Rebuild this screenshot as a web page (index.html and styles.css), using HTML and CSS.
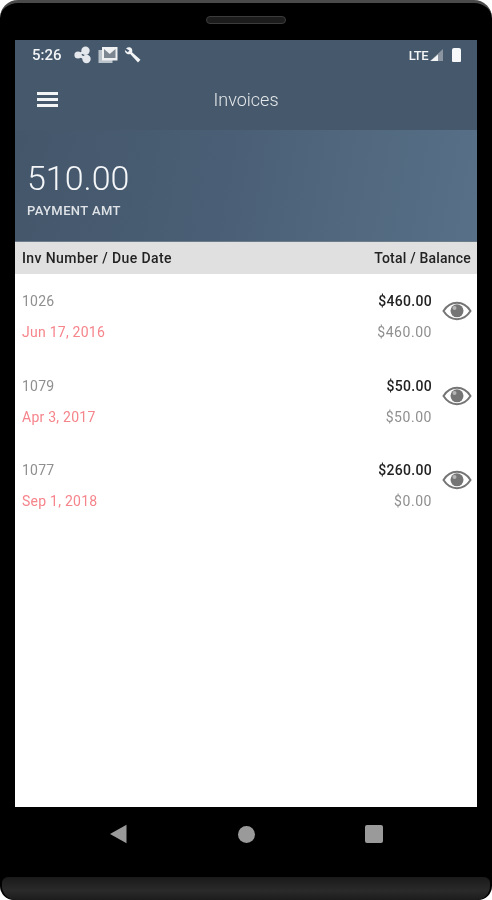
FILE: index.html
```html
<!DOCTYPE html>
<html lang="en">
    <head>
        <meta charset="UTF-8">
        <meta name="viewport" content="width=device-width, initial-scale=1.0">
        <title>Invoices</title>
        <link rel="stylesheet" href="styles.css">
    </head>
    <body>
        <div class="phone">
            <div class="speaker-row"><div class="speaker"></div></div>
            <div class="screen">
                <div class="status-bar">
                    <div class="status-left">
                        <span class="clock">5:26</span>
                        <svg class="status-icon" width="18" height="18" viewBox="0 0 18 18">
                            <circle cx="4" cy="9" r="3.600" fill="#e4e8ec"/>
                            <circle cx="11.500" cy="4.800" r="4.200" fill="#e4e8ec"/>
                            <circle cx="12.500" cy="13" r="4.200" fill="#e4e8ec"/>
                            <path d="M4 9L11.500 4.800M4 9L12.500 13" stroke="#e4e8ec" stroke-width="2.500"/>
                        </svg>
                        <svg class="status-icon" width="20" height="18" viewBox="0 0 20 18">
                            <rect x="0.500" y="4" width="14" height="13" fill="#b9c1c9"/>
                            <rect x="4" y="1" width="15.500" height="13.500" fill="#eef0f2"/>
                            <path d="M6 3L11.700 8L17.500 3V12H6Z" fill="#7d8792"/>
                            <path d="M7.500 3H16L11.700 6.500Z" fill="#eef0f2"/>
                        </svg>
                        <svg class="status-icon" width="18" height="18" viewBox="0 0 18 18">
                            <path d="M2 2.500C4 .8 7 1 8 3.200C8.600 4.500 8.300 5.500 8 6.200L16.500 13.800L14 16.500L6.200 8C4.500 8.700 2.500 8 1.500 6.500C1 5.600 .8 4.800 .9 4L3.800 6.300L5.400 4.500Z" fill="#f2f4f6"/>
                        </svg>
                    </div>
                    <div class="status-right">
                        <span class="lte">LTE</span>
                        <svg width="15" height="14" viewBox="0 0 15 14">
                            <path d="M14 1V13H1Z" fill="#8a95a1"/>
                            <path d="M9 6.500V13H1.500Z" fill="#f2f4f6"/>
                        </svg>
                        <div class="battery"></div>
                    </div>
                </div>
                <div class="toolbar">
                    <div class="hamburger">
                        <div></div>
                        <div></div>
                        <div></div>
                    </div>
                    <div class="toolbar-title">Invoices</div>
                </div>
                <div class="payment">
                    <div class="payment-value">510.00</div>
                    <div class="payment-label">PAYMENT AMT</div>
                </div>
                <div class="table-head">
                    <span class="head-left">Inv Number / Due Date</span>
                    <span class="head-right">Total / Balance</span>
                </div>
                <div class="invoice-list">
                    <div class="invoice">
                        <div class="invoice-left">
                            <div class="inv-number">1026</div>
                            <div class="inv-date">Jun 17, 2016</div>
                        </div>
                        <div class="invoice-right">
                            <div class="inv-total">$460.00</div>
                            <div class="inv-balance">$460.00</div>
                        </div>
                        <svg class="eye" width="30" height="20" viewBox="0 0 30 20">
                            <path d="M1.500 10C5 4.500 9.500 1.800 15 1.800C20.500 1.800 25 4.500 28.500 10C25 15.500 20.500 18.200 15 18.200C9.500 18.200 5 15.500 1.500 10Z" fill="none" stroke="#757575" stroke-width="2"/>
                            <circle cx="15" cy="9.800" r="6.500" fill="#757575"/>
                            <circle cx="12.500" cy="7" r="2" fill="#b5b5b5"/>
                        </svg>
                    </div>
                    <div class="invoice">
                        <div class="invoice-left">
                            <div class="inv-number">1079</div>
                            <div class="inv-date">Apr 3, 2017</div>
                        </div>
                        <div class="invoice-right">
                            <div class="inv-total">$50.00</div>
                            <div class="inv-balance">$50.00</div>
                        </div>
                        <svg class="eye" width="30" height="20" viewBox="0 0 30 20">
                            <path d="M1.500 10C5 4.500 9.500 1.800 15 1.800C20.500 1.800 25 4.500 28.500 10C25 15.500 20.500 18.200 15 18.200C9.500 18.200 5 15.500 1.500 10Z" fill="none" stroke="#757575" stroke-width="2"/>
                            <circle cx="15" cy="9.800" r="6.500" fill="#757575"/>
                            <circle cx="12.500" cy="7" r="2" fill="#b5b5b5"/>
                        </svg>
                    </div>
                    <div class="invoice">
                        <div class="invoice-left">
                            <div class="inv-number">1077</div>
                            <div class="inv-date">Sep 1, 2018</div>
                        </div>
                        <div class="invoice-right">
                            <div class="inv-total">$260.00</div>
                            <div class="inv-balance">$0.00</div>
                        </div>
                        <svg class="eye" width="30" height="20" viewBox="0 0 30 20">
                            <path d="M1.500 10C5 4.500 9.500 1.800 15 1.800C20.500 1.800 25 4.500 28.500 10C25 15.500 20.500 18.200 15 18.200C9.500 18.200 5 15.500 1.500 10Z" fill="none" stroke="#757575" stroke-width="2"/>
                            <circle cx="15" cy="9.800" r="6.500" fill="#757575"/>
                            <circle cx="12.500" cy="7" r="2" fill="#b5b5b5"/>
                        </svg>
                    </div>
                </div>
            </div>
            <div class="nav-bar">
                <svg width="18" height="20" viewBox="0 0 18 20"><path d="M0 10L16.500 .8V19.200Z" fill="#9a9a9a"/></svg>
                <div class="nav-circle"></div>
                <div class="nav-square"></div>
            </div>
            <div class="chin"></div>
        </div>
    </body>
</html>
```

FILE: styles.css
```css
body {
    font-family: Roboto, "Liberation Sans", sans-serif;
    margin: 0;
    padding: 0;
    background-color: white;
}

.phone {
    width: 492px;
    height: 900px;
    box-sizing: border-box;
    background-color: black;
    border-top: 3px solid #4a4a4a;
    border-radius: 18px 18px 14px 14px;
    display: flex;
    flex-direction: column;
    overflow: hidden;
    filter: blur(0.35px);
}

.speaker-row {
    height: 37px;
    display: flex;
    justify-content: center;
    padding-top: 13px;
    box-sizing: border-box;
}

.speaker {
    width: 80px;
    height: 8px;
    box-sizing: border-box;
    background-color: #1c1c1c;
    border: 1px solid #3c3c3c;
    border-radius: 4px;
}

.screen {
    margin: 0 15px;
    height: 767px;
    background-color: white;
    display: flex;
    flex-direction: column;
}

.status-bar {
    height: 30px;
    background-color: #46586b;
    display: flex;
    justify-content: space-between;
    align-items: center;
    padding: 0 16px 0 17px;
}

.status-left {
    display: flex;
    align-items: center;
    gap: 6px;
}

.clock {
    color: #f2f4f6;
    font-size: 15px;
    font-weight: 500;
    margin-right: 6px;
}

.status-right {
    display: flex;
    align-items: center;
    gap: 1px;
}

.lte {
    color: #f2f4f6;
    font-size: 13px;
    font-weight: 500;
    letter-spacing: -0.5px;
}

.battery {
    width: 9px;
    height: 14px;
    margin-left: 7px;
    background-color: #f6f7f8;
    border-radius: 2px 2px 1px 1px;
}

.toolbar {
    height: 60px;
    background-color: #46586b;
    display: flex;
    align-items: center;
    position: relative;
}

.hamburger {
    margin-left: 22px;
    padding-bottom: 2px;
}

.hamburger div {
    width: 21px;
    height: 3px;
    background-color: #f2f4f6;
    margin: 3px 0;
}

.toolbar-title {
    flex: 1;
    text-align: center;
    color: #e3e7ea;
    font-size: 18px;
    font-weight: 300;
    margin-right: 43px;
    padding-bottom: 2px;
}

.payment {
    height: 112px;
    box-sizing: border-box;
    padding: 28px 12px 0;
    background: linear-gradient(100deg, #44566a 0%, #4a5f75 45%, #587188 100%);
    border-bottom: 1px solid #6c7c8b;
}

.payment-value {
    color: #f4f6f8;
    font-size: 34px;
    font-weight: 300;
    line-height: 40px;
}

.payment-label {
    color: #dfe3e7;
    font-size: 13px;
    font-weight: 500;
    letter-spacing: 0.4px;
    margin-top: 5px;
}

.table-head {
    height: 32px;
    background-color: #e0e0e0;
    display: flex;
    justify-content: space-between;
    align-items: center;
    padding: 0 6px 0 7px;
    font-size: 14px;
    font-weight: 500;
    color: #222;
}

.head-left {
    letter-spacing: 0.4px;
}

.head-right {
    letter-spacing: 0.2px;
}

.invoice-list {
    padding-top: 12px;
}

.invoice {
    height: 84.5px;
    display: flex;
    align-items: flex-start;
    padding: 0 5px 0 7px;
    font-size: 14px;
    letter-spacing: 0.2px;
}

.invoice-left {
    flex: 1;
}

.invoice-right {
    text-align: right;
    margin-right: 10px;
}

.inv-number,
.inv-date,
.inv-total,
.inv-balance {
    height: 31px;
    line-height: 30px;
}

.inv-number {
    color: #8f8f8f;
}

.inv-date {
    color: #f6848b;
    letter-spacing: 0.25px;
}

.inv-total {
    color: #222;
    font-weight: 500;
    letter-spacing: 0.3px;
}

.inv-balance {
    color: #8f8f8f;
    letter-spacing: 0.55px;
}

.eye {
    margin-top: 15px;
}

.nav-bar {
    height: 54px;
    display: flex;
    align-items: center;
    justify-content: center;
    gap: 110px;
}

.nav-circle {
    width: 17px;
    height: 17px;
    border-radius: 50%;
    background-color: #9a9a9a;
}

.nav-square {
    width: 18px;
    height: 18px;
    border-radius: 2px;
    background-color: #9a9a9a;
}

.chin {
    margin: 16px 2px 0;
    flex: 1;
    background: linear-gradient(#1a1a1a, #2a2a2a 60%, #1c1c1c);
    border-radius: 6px 6px 14px 14px;
}
```
